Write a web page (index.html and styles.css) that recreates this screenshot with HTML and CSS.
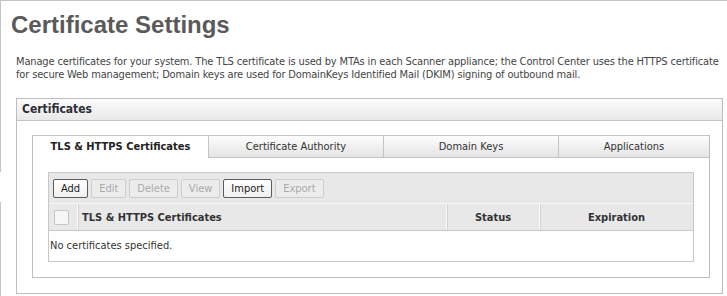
FILE: index.html
```html
<!DOCTYPE html>
<html lang="en">
<head>
  <meta charset="UTF-8" />
  <title>Certificate Settings</title>
  <link rel="stylesheet" href="styles.css">
</head>
<body>
  <div class="frame">
    <h1 class="page-title">Certificate Settings</h1>
    <p class="intro">Manage certificates for your system. The TLS certificate is used by MTAs in each Scanner appliance; the Control Center uses the HTTPS certificate for secure Web management; Domain keys are used for DomainKeys Identified Mail (DKIM) signing of outbound mail.</p>

    <section class="panel">
      <div class="panel-head">Certificates</div>
      <div class="panel-body">
        <div class="tabs">
          <div class="tab-row">
            <div class="tab active">TLS &amp; HTTPS Certificates</div>
            <div class="tab">Certificate Authority</div>
            <div class="tab">Domain Keys</div>
            <div class="tab last">Applications</div>
          </div>
          <div class="tab-body">
            <div class="grid">
              <div class="toolbar">
                <button class="btn">Add</button>
                <button class="btn" disabled>Edit</button>
                <button class="btn" disabled>Delete</button>
                <button class="btn" disabled>View</button>
                <button class="btn">Import</button>
                <button class="btn" disabled>Export</button>
              </div>
              <div class="grid-head">
                <div class="col col-check"><span class="checkbox"></span></div>
                <div class="col col-name">TLS &amp; HTTPS Certificates</div>
                <div class="col col-status">Status</div>
                <div class="col col-exp">Expiration</div>
              </div>
              <div class="grid-empty">No certificates specified.</div>
            </div>
          </div>
        </div>
      </div>
    </section>
  </div>
</body>
</html>
```

FILE: styles.css
```css
* { box-sizing: border-box; margin: 0; padding: 0; }
body {
  background: #fff;
  font-family: "DejaVu Sans Condensed", "DejaVu Sans", sans-serif;
  font-size: 11px;
  color: #333;
}
/* outer frame: top line plus a broken left line */
.frame {
  width: 727px;
  height: 296px;
  border-top: 1px solid #c4c4c4;
  background:
    linear-gradient(#c4c4c4, #c4c4c4) 0 0 / 1px 171px no-repeat,
    linear-gradient(#c4c4c4, #c4c4c4) 0 201px / 1px 100px no-repeat;
  padding: 9px 0 0 11px;
}
.page-title {
  font-family: "Liberation Sans", Arial, sans-serif;
  font-size: 24px;
  line-height: 30px;
  font-weight: bold;
  color: #5a5a5a;
}
.intro {
  margin: 15px 0 0 5px;
  line-height: 13px;
  letter-spacing: -0.15px;
  color: #444;
}
.panel {
  margin: 17px 0 0 5px;
  width: 707px;
  height: 196px;
  border: 1px solid #bdbdbd;
}
.panel-head {
  height: 22px;
  line-height: 21px;
  padding-left: 5px;
  font-size: 12px;
  font-weight: bold;
  color: #2d2d36;
  background: linear-gradient(#fbfbfb, #e9e9e9);
  border-bottom: 1px solid #c4c4c4;
}
.panel-body {
  padding: 14px 12px 0 15px;
}
.tabs {
  width: 678px;
  height: 143px;
  border-left: 1px solid #bdbdbd;
  border-right: 1px solid #bdbdbd;
  border-bottom: 1px solid #bdbdbd;
}
.tab-row {
  display: flex;
  height: 23px;
}
.tab {
  width: 175px;
  height: 23px;
  line-height: 21px;
  text-align: center;
  border-top: 1px solid #c4c4c4;
  border-bottom: 1px solid #c4c4c4;
  border-left: 1px solid #c4c4c4;
  background: linear-gradient(#fdfdfd, #e4e4e4);
  color: #333;
}
.tab.active {
  background: #fff;
  border-left: none;
  border-bottom-color: #fff;
  font-weight: bold;
  color: #222;
}
.tab.last { flex: 1; }
.tab-body {
  padding: 14px 15px 0 15px;
}
.grid {
  border: 1px solid #c8c8c8;
}
.toolbar {
  display: flex;
  gap: 3px;
  height: 31px;
  padding: 6px 0 0 4px;
  background: #e8e8e8;
  border-bottom: 1px solid #f6f6f6;
}
.btn {
  height: 19px;
  padding: 0 7px;
  font-family: inherit;
  font-size: 11px;
  color: #222;
  background: linear-gradient(#ffffff, #f0f0f0);
  border: 1px solid #5c5c5c;
  border-radius: 2px;
}
.btn[disabled] {
  color: #aaa;
  border-color: #cdcdcd;
  background: #ececec;
}
.grid-head {
  display: flex;
  height: 27px;
  background: #e8e8e8;
  border-bottom: 1px solid #c8c8c8;
  font-weight: bold;
  color: #333;
}
.col {
  display: flex;
  align-items: center;
  border-left: 1px solid #fbfbfb;
  box-shadow: inset 1px 0 0 #d2d2d2;
}
.col-check {
  width: 28px;
  padding-left: 5px;
  border-left: none;
  box-shadow: none;
}
.checkbox {
  width: 15px;
  height: 15px;
  border: 1px solid #c6c6c6;
  border-radius: 2px;
  background: #f6f6f6;
}
.col-name { width: 369px; padding-left: 4px; }
.col-status { width: 93px; justify-content: center; }
.col-exp { flex: 1; justify-content: center; }
.grid-empty {
  height: 30px;
  line-height: 30px;
  padding-left: 1px;
}
```
